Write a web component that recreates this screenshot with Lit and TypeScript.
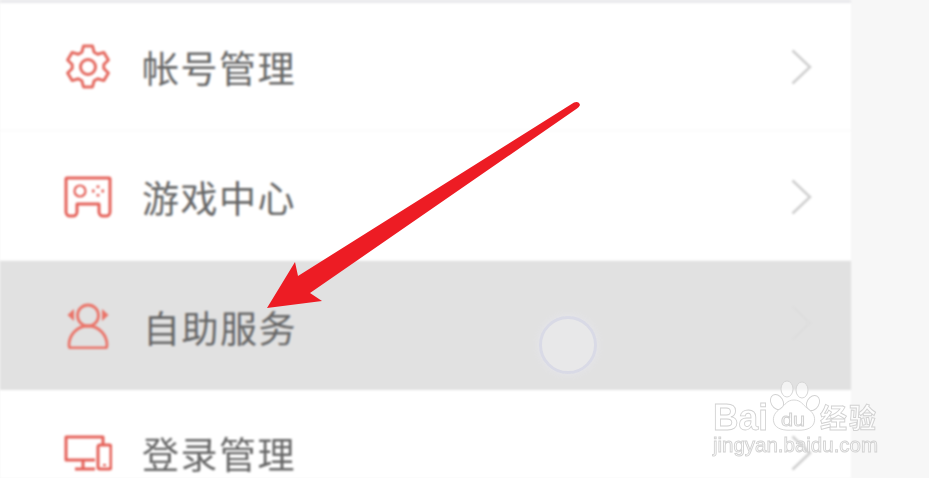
import { LitElement, html, css, svg } from "lit";
import { customElement } from "lit/decorators.js";

const gear = svg`<svg class="icon" viewBox="0 0 48 48" fill="none" stroke="#e56a60" stroke-width="3" stroke-linejoin="round">
  <path d="M19.500 3h9l1.600 6.200 3.600 2 6.200-1.800 4.500 7.600-4.600 4.500v4l4.600 4.500-4.500 7.600-6.200-1.800-3.600 2-1.600 6.200h-9l-1.600-6.200-3.600-2-6.200 1.800-4.500-7.600 4.600-4.500v-4l-4.600-4.500 4.500-7.600 6.200 1.800 3.600-2z"/>
  <circle cx="24" cy="24" r="7.500"/></svg>`;
const pad = svg`<svg class="icon" viewBox="0 0 48 42" fill="none" stroke="#e5625a" stroke-width="3" stroke-linejoin="round">
  <path d="M3 2h42a1 1 0 0 1 1 1v33a4 4 0 0 1-4 4h-3a4 4 0 0 1-4-4v-8H13v8a4 4 0 0 1-4 4H6a4 4 0 0 1-4-4V3a1 1 0 0 1 1-1z"/>
  <circle cx="16" cy="15" r="5.500" stroke-width="2.200"/>
  <path d="M34 9.500v2.500M34 18v2.500M28 15h2.500M37.500 15h2.500" stroke-width="2.800"/></svg>`;
const person = svg`<svg class="icon person" viewBox="0 0 42 46" fill="none" stroke="#ea7469" stroke-width="2.800" stroke-linejoin="round">
  <circle cx="21" cy="12.500" r="10.500"/>
  <path d="M21 23C10 23 2 32 2 42c0 2 1 3 2 3h34c1 0 2-1 2-3 0-10-8-19-19-19z"/>
  <path d="M7 6L0.500 12 7 18zM35 6l6.500 6L35 18z" fill="#ea7469" stroke="none"/></svg>`;
const device = svg`<svg class="icon" viewBox="0 0 48 36" fill="none" stroke="#e5625a" stroke-width="3" stroke-linejoin="round">
  <path d="M31 25H2V2h37v7"/>
  <path d="M11 34h20M19 25v9"/>
  <rect x="34" y="10" width="13" height="24" rx="2"/>
  <path d="M39 30h3" stroke-width="2"/></svg>`;

@customElement("app-root")
export class AppRoot extends LitElement {
  static styles = css`
    :host { display: block; width: 929px; height: 478px; overflow: hidden; background: #f7f7f7; position: relative; font-family: "Noto Sans CJK SC", "Liberation Sans", sans-serif; }
    .list { width: 851px; height: 478px; background: #fff; border-top: 3px solid #e9e9ec; box-sizing: border-box; filter: blur(0.9px); }
    .row { display: flex; align-items: center; box-sizing: border-box; height: 130px; padding: 2px 39px 0 64px; border-bottom: 1px solid #f8f8f8; color: #666; }
    .row.active { height: 129px; padding-top: 0; background: #e1e1e1; border-bottom: 0; }
    .row.first { height: 128px; padding-top: 0; }
    .row.last { height: 85px; border: 0; align-items: flex-start; padding-top: 45px; }
    .slot { width: 48px; display: flex; justify-content: center; }
    .icon { display: block; width: 48px; }
    .icon.person { width: 42px; }
    .label { flex: 1; margin-left: 30px; font-size: 37px; font-weight: 400; letter-spacing: 1.500px; line-height: 44px; white-space: nowrap; }
    .active .label { margin-left: 31px; padding-top: 2px; }
    .last .label { margin-top: -2px; line-height: 40px; }
    .chev { width: 21px; height: 36px; display: block; }
    .active .chev { opacity: 0.12; margin-top: -6px; }
    .overlay { position: absolute; left: 0; top: 0; width: 929px; height: 478px; }
    .touch { position: absolute; left: 539px; top: 316px; width: 58px; height: 58px; box-sizing: border-box; border-radius: 50%; background: #e8e8e9; border: 3px solid #d9dae6; box-shadow: 0 0 8px #e6e6ec; filter: blur(0.6px); }
    .mark { font-family: "Liberation Sans", sans-serif; fill: rgba(255,255,255,0.6); stroke: #d2d2d2; stroke-width: 0.9; filter: blur(0.4px); }
    .mark .cjk { font-family: "Noto Sans CJK SC", sans-serif; font-weight: 700; }
    .mark .big { font-weight: 700; }
  `;

  private chevron() {
    return svg`<svg class="chev" viewBox="0 0 21 36" fill="none" stroke="#cfcfcf" stroke-width="2.500"><path d="M1.500 1.500L19 18 1.500 34.500"/></svg>`;
  }

  private row(icon: unknown, text: string, cls: string) {
    return html`<div class="row ${cls}"><div class="slot">${icon}</div><div class="label">${text}</div>${this.chevron()}</div>`;
  }

  render() {
    return html`
      <div class="list">
        ${this.row(gear, "帐号管理", "first")}
        ${this.row(pad, "游戏中心", "")}
        ${this.row(person, "自助服务", "active")}
        ${this.row(device, "登录管理", "last")}
      </div>
      <div class="touch"></div>
      <svg class="overlay" viewBox="0 0 929 478">
        <path d="M574 102.500Q579 101 580 105 579 107 577 108.500L310 293 322 301 267 308 295 262 298 276z" fill="#ed1c24"/>
        <g class="mark">
          <ellipse cx="787" cy="389" rx="6" ry="8"/>
          <ellipse cx="802" cy="390" rx="6" ry="8"/>
          <ellipse cx="777" cy="402" rx="6" ry="8" transform="rotate(-30 777 402)"/>
          <ellipse cx="813" cy="403" rx="6" ry="8" transform="rotate(30 813 403)"/>
          <path d="M794 400c7 0 9 5 13 8 6 4 9 9 7 15-2 6-10 8-20 7-10 1-18-1-20-7-2-6 1-11 7-15 4-3 6-8 13-8z"/>
          <text class="big" x="713" y="430" font-size="37" textLength="55" lengthAdjust="spacingAndGlyphs">Bai</text>
          <text x="781" y="426" font-size="18" textLength="24" lengthAdjust="spacingAndGlyphs">du</text>
          <text class="cjk" x="820" y="428" font-size="27" textLength="56">经验</text>
          <text x="713" y="452" font-size="20" textLength="165" lengthAdjust="spacingAndGlyphs">jingyan.baidu.com</text>
        </g>
      </svg>
    `;
  }
}
